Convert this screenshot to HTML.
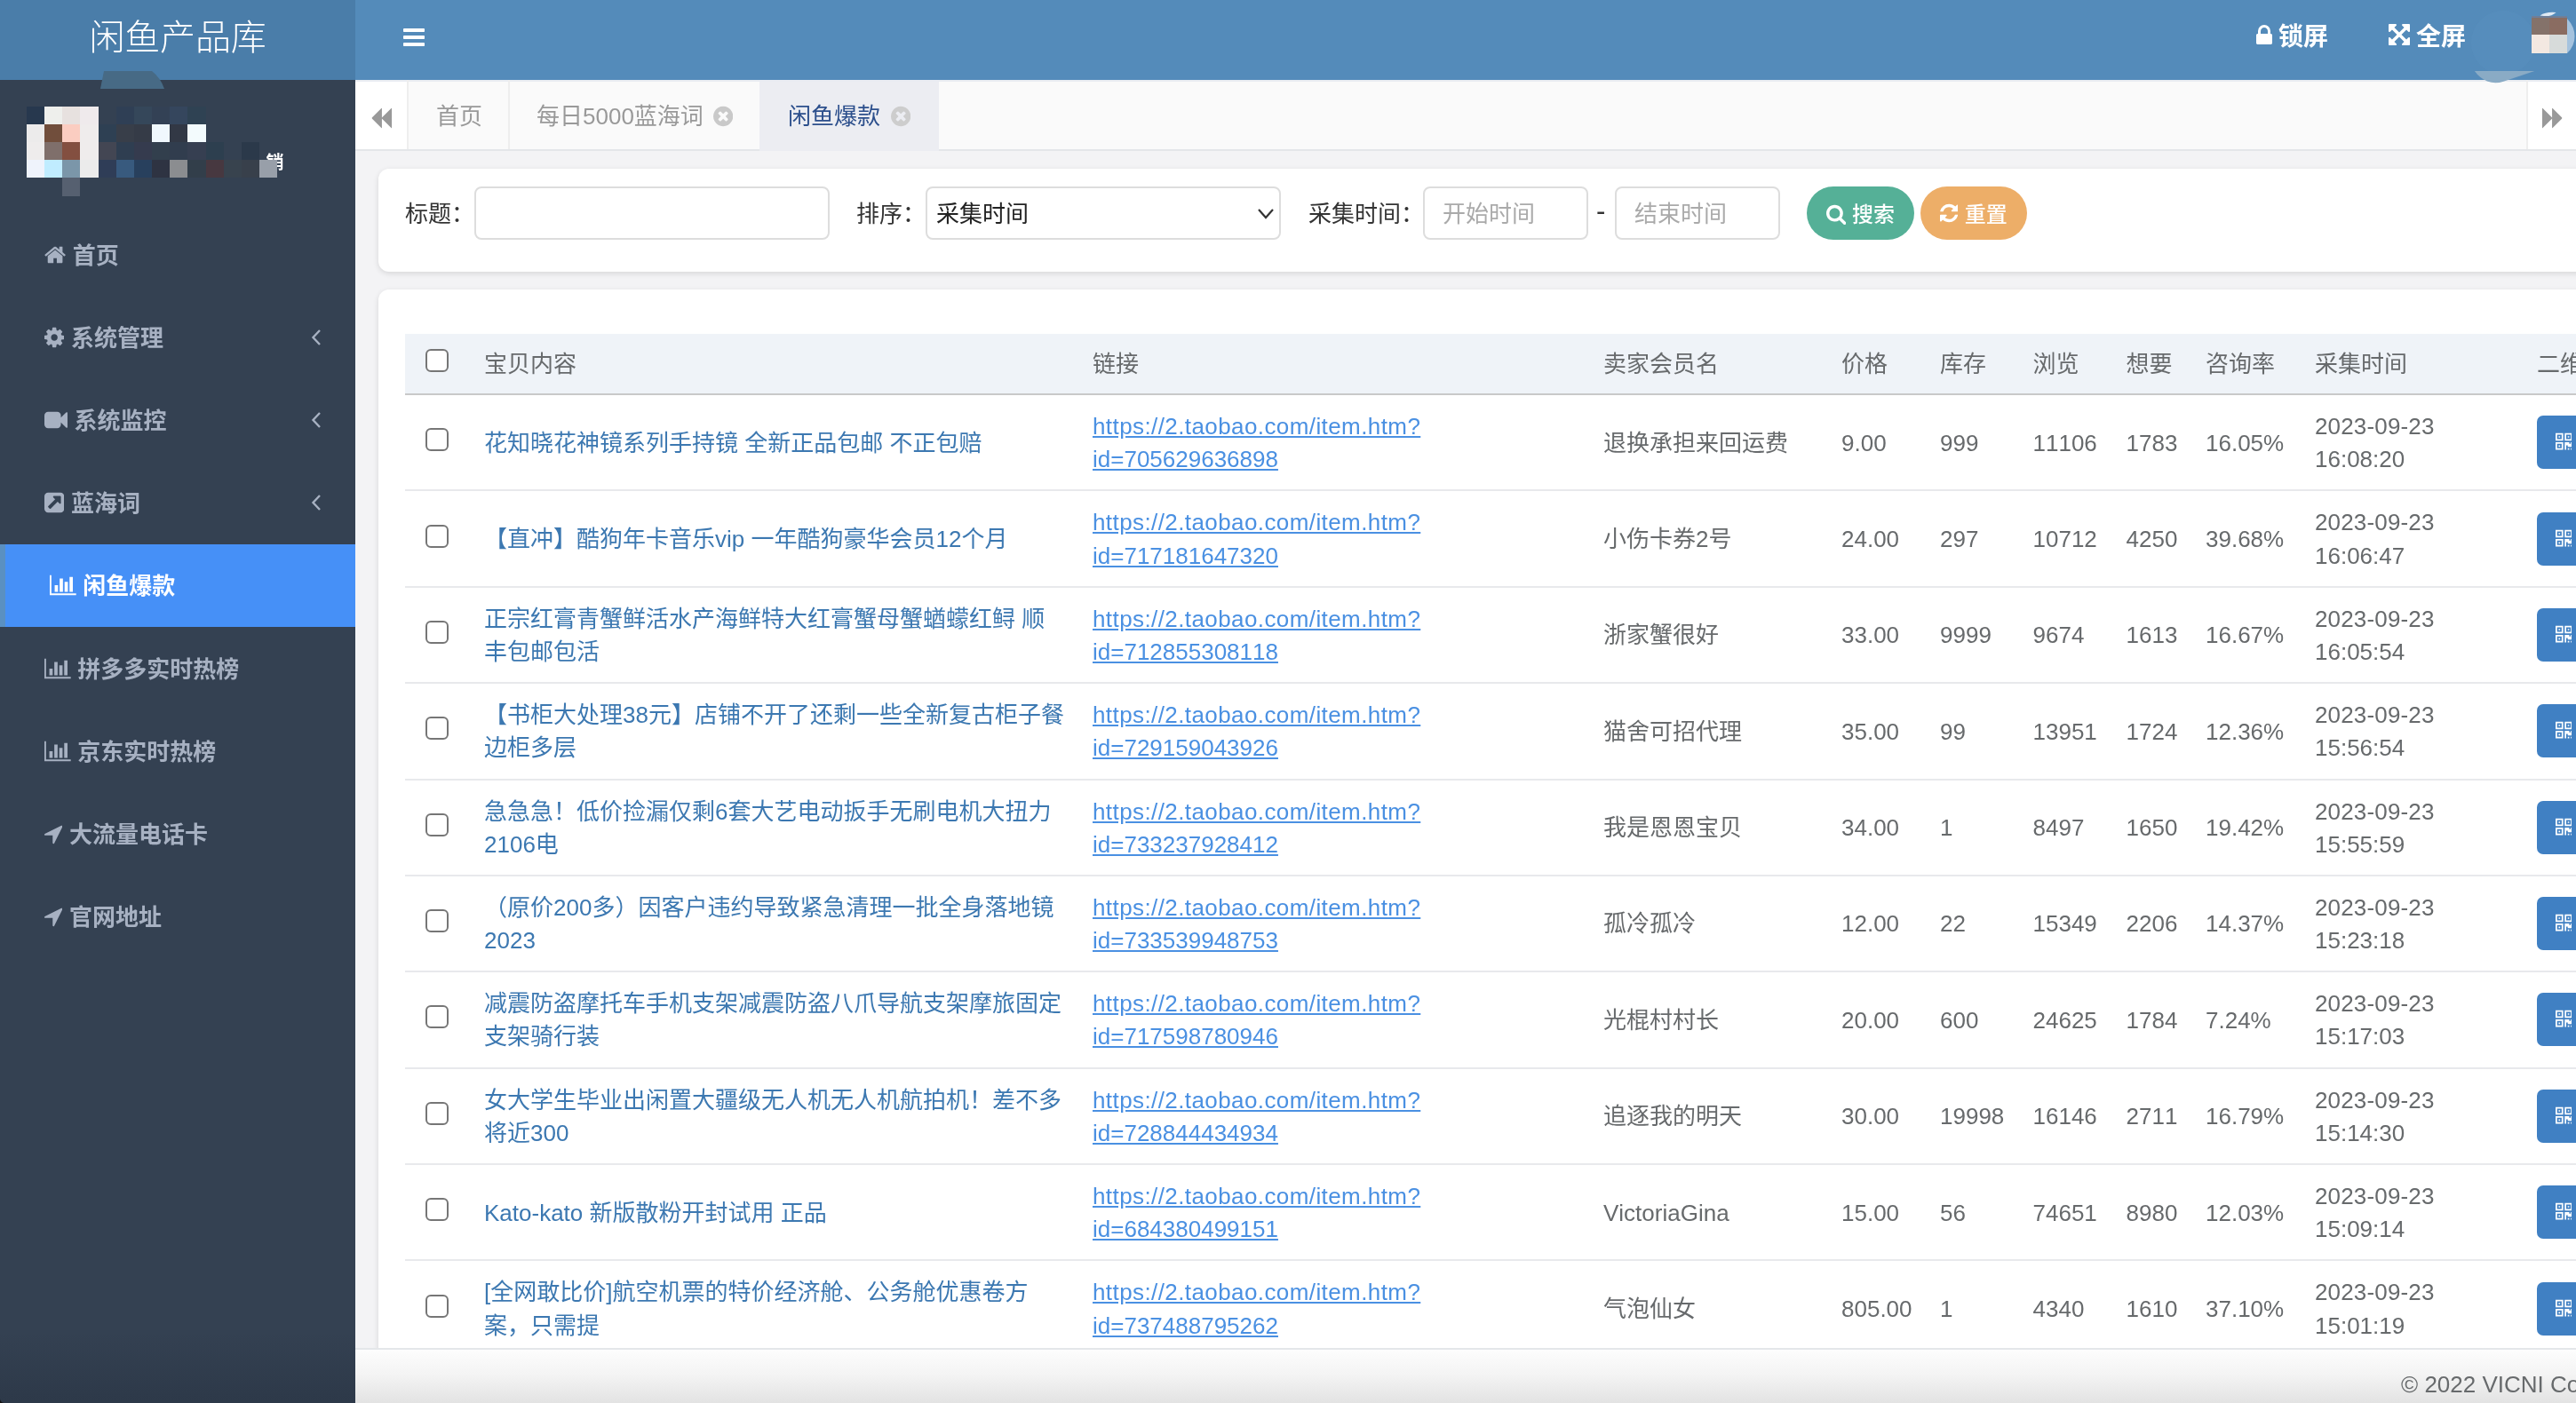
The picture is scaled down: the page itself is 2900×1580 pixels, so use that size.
<!DOCTYPE html>
<html lang="zh-CN"><head><meta charset="utf-8"><title>闲鱼产品库</title>
<style>
*{box-sizing:border-box}
html,body{margin:0;padding:0}
body{will-change:transform;font-kerning:none;width:2900px;height:1580px;overflow:hidden;position:relative;background:#f3f3f5;font-family:"Liberation Sans","Noto Sans CJK SC",sans-serif;font-size:26px;line-height:1.42857;color:#676a6c}
.ic{display:inline-block;vertical-align:middle;flex:none}
#side{position:absolute;left:0;top:0;width:400px;height:1580px;background:#344152}
#sidegrad{position:absolute;left:0;top:1500px;width:400px;height:80px;background:linear-gradient(rgba(20,28,40,0),rgba(20,28,40,.22))}
#corner{position:absolute;left:0;top:1575px;width:5px;height:5px;background:radial-gradient(circle at 100% 0,rgba(0,0,0,0) 4.5px,#111 5.5px)}
#logo{position:absolute;left:0;top:0;width:400px;height:90px;background:#4a7da9;color:#fff;font-size:40px;font-weight:300;line-height:90px;text-align:center}
#logo span{position:absolute;left:0;top:-3.5px;width:400px;text-align:center;letter-spacing:-0.2px}
#trap{position:absolute;left:113px;top:80px}
#mos i{position:absolute;display:block}
#xiao{position:absolute;left:299.5px;top:168.5px;font-size:20px;font-weight:700;color:#fff;line-height:28px}
.mi{position:relative;height:93.14px;padding-left:50px;display:flex;align-items:center;font-weight:700;font-size:26px;color:#a7b1c2;white-space:nowrap}
.mi span{margin-left:7.6px;position:relative;top:1.5px}
.mi.active{background:#4690f7;border-left:6px solid #5a90c2;color:#fff}
.mi .arr{position:absolute;left:350px;top:36px}
#menu{position:absolute;left:0;top:240.4px;width:400px}
#head{position:absolute;left:400px;top:0;width:2500px;height:90px;background:#548bba}
#head .t{position:absolute;top:0;height:90px;line-height:84px;color:#fff;font-size:28px;font-weight:700;white-space:nowrap}
#tabs{position:absolute;left:400px;top:90px;width:2500px;height:80px;background:#fafafa;border-bottom:2px solid #e4e6e9;box-shadow:inset 0 2px 0 #e9ecf2}
#tabs .tb{position:absolute;top:0;height:78px;line-height:83px;color:#999;font-size:26px;white-space:nowrap;border-right:2px solid #eee;background:#fafafa;box-shadow:inset 0 2px 0 #e9ecf2}
.card{position:absolute;left:426px;width:2600px;background:#fff;border-radius:12px;box-shadow:0 2px 6px rgba(0,0,0,.12)}
.lab{position:absolute;top:0;height:60px;line-height:62px;font-size:26px;color:#333;white-space:nowrap}
.inp{position:absolute;top:0;height:60px;border:2px solid #ddd;border-radius:8px;background:#fff;font-size:26px;line-height:58px;color:#aaa;padding-left:20px;white-space:nowrap}
.btn{position:absolute;top:0;height:60px;border-radius:30px;color:#fff;font-size:24px;font-weight:500;line-height:63.5px;white-space:nowrap}
table{border-collapse:collapse;table-layout:fixed;position:absolute;left:30px;top:50px;width:2599px}
th{background:#eff3f8;font-weight:400;text-align:left;padding:16px 16px 14px 16px;height:68px;line-height:37px;border-bottom:2px solid #c9c9c9;color:#676a6c;white-space:nowrap;overflow:hidden}
td{padding:17px 16px 15px;height:108.375px;border-bottom:2px solid #e8e9ec;vertical-align:middle;white-space:nowrap;color:#676a6c;overflow:hidden}
td.tt a{color:#3c78b1}
a.lk{color:#4a90e2;text-decoration:underline}
.l1{letter-spacing:.41px}
.d1{letter-spacing:.16px}
th .cb{top:-4.5px}
.cb{position:relative;top:-4px;left:-1px;display:block;width:26px;height:26px;border:2px solid #767676;border-radius:6px;background:#fff;margin:0 auto}
td.ck,th.ck{padding-left:0;padding-right:0}
.qb{display:block;width:120px;height:60px;background:#4080c3;border-radius:7px;padding:18px 0 0 20.6px;line-height:0}
td.op{padding-top:0;padding-bottom:0}
#foot{position:absolute;left:400px;top:1518px;width:2500px;height:62px;background:linear-gradient(#fdfdfd,#f4f4f4 45%,#e3e3e3);border-top:2px solid #e4e7ea;overflow:hidden}
#foot span{position:absolute;left:2303px;top:9px;font-size:26px;color:#676a6c;white-space:nowrap;line-height:60px}
</style></head><body>
<div id="side">
<div id="logo"><span>闲鱼产品库</span></div>
<svg id="trap" width="74" height="22" viewBox="0 0 74 22"><path d="M4 0 H58 Q68 8 72 20 H0 Z" fill="#476a85"/></svg>
<div id="xiao">销</div>
<div id="mos"><i style="left:30px;top:120px;width:20px;height:20px;background:#27384e"></i><i style="left:50px;top:120px;width:20px;height:20px;background:#eeefec"></i><i style="left:70px;top:120px;width:20px;height:20px;background:#e7e1df"></i><i style="left:90px;top:120px;width:21px;height:20px;background:#efeaec"></i><i style="left:131px;top:120px;width:20px;height:20px;background:#2f3f55"></i><i style="left:151px;top:120px;width:20px;height:20px;background:#35475a"></i><i style="left:171px;top:120px;width:20px;height:20px;background:#334155"></i><i style="left:191px;top:120px;width:20px;height:20px;background:#35465d"></i><i style="left:211px;top:120px;width:21px;height:20px;background:#2f4253"></i><i style="left:30px;top:140px;width:20px;height:20px;background:#ecebeb"></i><i style="left:50px;top:140px;width:20px;height:20px;background:#714e3c"></i><i style="left:70px;top:140px;width:20px;height:20px;background:#fbcdc1"></i><i style="left:90px;top:140px;width:21px;height:20px;background:#efecec"></i><i style="left:111px;top:140px;width:20px;height:20px;background:#2e4053"></i><i style="left:131px;top:140px;width:20px;height:20px;background:#383e49"></i><i style="left:151px;top:140px;width:20px;height:20px;background:#353b47"></i><i style="left:171px;top:140px;width:20px;height:20px;background:#f0f8fd"></i><i style="left:191px;top:140px;width:20px;height:20px;background:#323845"></i><i style="left:211px;top:140px;width:21px;height:20px;background:#f3fbfd"></i><i style="left:30px;top:160px;width:20px;height:20px;background:#eeecec"></i><i style="left:50px;top:160px;width:20px;height:20px;background:#7f6f6b"></i><i style="left:70px;top:160px;width:20px;height:20px;background:#834f40"></i><i style="left:90px;top:160px;width:21px;height:20px;background:#efecec"></i><i style="left:111px;top:160px;width:20px;height:20px;background:#434653"></i><i style="left:131px;top:160px;width:20px;height:20px;background:#2f3e51"></i><i style="left:151px;top:160px;width:20px;height:20px;background:#353b4e"></i><i style="left:171px;top:160px;width:20px;height:20px;background:#323f4d"></i><i style="left:191px;top:160px;width:20px;height:20px;background:#313d4e"></i><i style="left:211px;top:160px;width:21px;height:20px;background:#363f51"></i><i style="left:232px;top:160px;width:20px;height:20px;background:#2d3f4f"></i><i style="left:272px;top:160px;width:20px;height:20px;background:#2b394a"></i><i style="left:30px;top:180px;width:20px;height:20px;background:#eff3fc"></i><i style="left:50px;top:180px;width:20px;height:20px;background:#c0ecff"></i><i style="left:70px;top:180px;width:20px;height:20px;background:#7b96a9"></i><i style="left:90px;top:180px;width:21px;height:20px;background:#ebebeb"></i><i style="left:111px;top:180px;width:20px;height:20px;background:#2f3d57"></i><i style="left:131px;top:180px;width:20px;height:20px;background:#385a7e"></i><i style="left:151px;top:180px;width:20px;height:20px;background:#28405d"></i><i style="left:171px;top:180px;width:20px;height:20px;background:#2e3342"></i><i style="left:191px;top:180px;width:20px;height:20px;background:#8b8d90"></i><i style="left:211px;top:180px;width:21px;height:20px;background:#323e4a"></i><i style="left:232px;top:180px;width:20px;height:20px;background:#473840"></i><i style="left:252px;top:180px;width:20px;height:20px;background:#38434e"></i><i style="left:272px;top:180px;width:20px;height:20px;background:#38404b"></i><i style="left:292px;top:180px;width:20px;height:20px;background:#989fa9"></i><i style="left:70px;top:200px;width:20px;height:21px;background:#566070"></i></div>
<div id="sidegrad"></div><div id="corner"></div>
<div id="menu">
<div class="mi"><svg class="ic" viewBox="64 0 1664 1792" width="24.14" height="26" style=""><path fill="#a7b1c2" d="M1472 992v480q0 26-19 45t-45 19h-384v-384h-256v384h-384q-26 0-45-19t-19-45v-480q0-1 .5-3t.5-3l575-474 575 474q1 2 1 6zm223-69l-62 74q-8 9-21 11h-3q-13 0-21-7l-692-577-692 577q-12 8-24 7-13-2-21-11l-62-74q-8-10-7-23.500t11-21.500l719-599q32-26 76-26t76 26l244 204v-195q0-14 9-23t23-9h192q14 0 23 9t9 23v408l219 182q10 8 11 21.500t-7 23.500z"/></svg><span>首页</span></div>
<div class="mi"><svg class="ic" viewBox="128 0 1536 1792" width="22.29" height="26" style=""><path fill="#a7b1c2" d="M1152 896q0-106-75-181t-181-75-181 75-75 181 75 181 181 75 181-75 75-181zm512-109v222q0 12-8 23t-20 13l-185 28q-19 54-39 91 35 50 107 138 10 12 10 25t-9 23q-27 37-99 108t-94 71q-12 0-26-9l-138-108q-44 23-91 38-16 136-29 186-7 28-36 28h-222q-14 0-24.500-8.500t-11.500-21.500l-28-184q-49-16-90-37l-141 107q-10 9-25 9-14 0-25-11-126-114-165-168-7-10-7-23 0-12 8-23 15-21 51-66.500t54-70.500q-27-50-41-99l-183-27q-13-2-21-12.500t-8-23.500v-222q0-12 8-23t19-13l186-28q14-46 39-92-40-57-107-138-10-12-10-24 0-10 9-23 26-36 98.500-107.500t94.500-71.500q13 0 26 10l138 107q44-23 91-38 16-136 29-186 7-28 36-28h222q14 0 24.500 8.500t11.500 21.500l28 184q49 16 90 37l142-107q9-9 24-9 13 0 25 10 129 119 165 170 7 8 7 22 0 12-8 23-15 21-51 66.500t-54 70.500q26 50 41 98l183 28q13 2 21 12.500t8 23.500z"/></svg><span>系统管理</span><svg class="arr" width="12" height="20" viewBox="0 0 12 20"><path d="M10 2 L2.5 10 L10 18" fill="none" stroke="#a7b1c2" stroke-width="2.4"/></svg></div>
<div class="mi"><svg class="ic" viewBox="0 0 1792 1792" width="26.00" height="26" style=""><path fill="#a7b1c2" d="M1792 352v1088q0 42-39 59-13 5-25 5-27 0-45-19l-403-403v166q0 119-84.500 203.500t-203.500 84.500h-704q-119 0-203.500-84.500t-84.500-203.500v-704q0-119 84.500-203.500t203.500-84.500h704q119 0 203.500 84.500t84.500 203.500v165l403-402q18-19 45-19 12 0 25 5 39 17 39 59z"/></svg><span>系统监控</span><svg class="arr" width="12" height="20" viewBox="0 0 12 20"><path d="M10 2 L2.5 10 L10 18" fill="none" stroke="#a7b1c2" stroke-width="2.4"/></svg></div>
<div class="mi"><svg class="ic" viewBox="128 0 1536 1792" width="22.29" height="26" style=""><path fill="#a7b1c2" d="M1408 928v-480q0-26-19-45t-45-19h-480q-42 0-59 39-17 41 14 70l144 144-534 534q-19 19-19 45t19 45l102 102q19 19 45 19t45-19l534-534 144 144q18 19 45 19 12 0 25-5 39-17 39-59zm256-512v960q0 119-84.500 203.500t-203.500 84.500h-960q-119 0-203.500-84.500t-84.500-203.500v-960q0-119 84.500-203.500t203.500-84.500h960q119 0 203.500 84.500t84.500 203.500z"/></svg><span>蓝海词</span><svg class="arr" width="12" height="20" viewBox="0 0 12 20"><path d="M10 2 L2.5 10 L10 18" fill="none" stroke="#a7b1c2" stroke-width="2.4"/></svg></div>
<div class="mi active"><svg class="ic" viewBox="0 0 2048 1792" width="29.71" height="26" style=""><path fill="#fff" d="M640 896v512h-256v-512h256zm384-512v1024h-256v-1024h256zm1024 1152v128h-2048v-1536h128v1408h1920zm-640-896v768h-256v-768h256zm384-384v1152h-256v-1152h256z"/></svg><span>闲鱼爆款</span></div>
<div class="mi"><svg class="ic" viewBox="0 0 2048 1792" width="29.71" height="26" style=""><path fill="#a7b1c2" d="M640 896v512h-256v-512h256zm384-512v1024h-256v-1024h256zm1024 1152v128h-2048v-1536h128v1408h1920zm-640-896v768h-256v-768h256zm384-384v1152h-256v-1152h256z"/></svg><span>拼多多实时热榜</span></div>
<div class="mi"><svg class="ic" viewBox="0 0 2048 1792" width="29.71" height="26" style=""><path fill="#a7b1c2" d="M640 896v512h-256v-512h256zm384-512v1024h-256v-1024h256zm1024 1152v128h-2048v-1536h128v1408h1920zm-640-896v768h-256v-768h256zm384-384v1152h-256v-1152h256z"/></svg><span>京东实时热榜</span></div>
<div class="mi"><svg class="ic" viewBox="192 0 1408 1792" width="20.43" height="26" style=""><path fill="#a7b1c2" d="M1593 349l-640 1280q-17 35-57 35-5 0-15-2-22-5-35.500-22.500t-13.500-39.500v-576h-576q-22 0-39.500-13.500t-22.500-35.500 4-42 29-30l1280-640q13-7 29-7 27 0 45 19 15 14 18.500 34.500t-6.500 39.500z"/></svg><span>大流量电话卡</span></div>
<div class="mi"><svg class="ic" viewBox="192 0 1408 1792" width="20.43" height="26" style=""><path fill="#a7b1c2" d="M1593 349l-640 1280q-17 35-57 35-5 0-15-2-22-5-35.500-22.500t-13.500-39.500v-576h-576q-22 0-39.500-13.500t-22.500-35.500 4-42 29-30l1280-640q13-7 29-7 27 0 45 19 15 14 18.500 34.500t-6.500 39.500z"/></svg><span>官网地址</span></div>
</div>
</div>
<div id="head">
<svg class="ic" viewBox="128 0 1536 1792" width="24.00" height="28" style="position:absolute;left:54px;top:28px"><path fill="#fff" d="M1664 1344v128q0 26-19 45t-45 19h-1408q-26 0-45-19t-19-45v-128q0-26 19-45t45-19h1408q26 0 45 19t19 45zm0-512v128q0 26-19 45t-45 19h-1408q-26 0-45-19t-19-45v-128q0-26 19-45t45-19h1408q26 0 45 19t19 45zm0-512v128q0 26-19 45t-45 19h-1408q-26 0-45-19t-19-45v-128q0-26 19-45t45-19h1408q26 0 45 19t19 45z"/></svg>
<svg class="ic" viewBox="320 0 1152 1792" width="18.00" height="28" style="position:absolute;left:2139.7px;top:26px"><path fill="#fff" d="M640 768h512v-192q0-106-75-181t-181-75-181 75-75 181v192zm832 96v576q0 40-28 68t-68 28h-960q-40 0-68-28t-28-68v-576q0-40 28-68t68-28h32v-192q0-184 132-316t316-132 316 132 132 316v192h32q40 0 68 28t28 68z"/></svg><div class="t" style="left:2165px">锁屏</div>
<svg class="ic" viewBox="128 0 1536 1792" width="24.00" height="28" style="position:absolute;left:2288.6px;top:25.4px"><path fill="#fff" d="M1411 541l-355 355 355 355 144-144q29-31 70-14 39 17 39 59v448q0 26-19 45t-45 19h-448q-42 0-59-40-17-39 14-69l144-144-355-355-355 355 144 144q31 30 14 69-17 40-59 40h-448q-26 0-45-19t-19-45v-448q0-42 40-59 39-17 69 14l144 144 355-355-355-355-144 144q-19 19-45 19-12 0-24-5-40-17-40-59v-448q0-26 19-45t45-19h448q42 0 59 40 17 39-14 69l-144 144 355 355 355-355-144-144q-31-30-14-69 17-40 59-40h448q26 0 45 19t19 45v448q0 42-39 59-13 5-25 5-26 0-45-19z"/></svg><div class="t" style="left:2320px">全屏</div>


</div>
<div id="tabs">
<div class="tb" style="left:0;width:60px;background:#fff"><svg class="ic" viewBox="0 0 1792 1792" width="26.00" height="26" style="position:absolute;left:15.9px;top:29.6px"><path fill="#999" d="M1683 141q19-19 32-13t13 32v1472q0 26-13 32t-32-13l-710-710q-9-9-13-19v710q0 26-13 32t-32-13l-710-710q-19-19-19-45t19-45l710-710q19-19 32-13t13 32v710q4-10 13-19z"/></svg></div>
<div class="tb" style="left:60px;width:114px;padding-left:31px">首页</div>
<div class="tb" style="left:174px;width:281px;padding-left:30px;border-right:0">每日5000蓝海词<svg class="ic" viewBox="128 0 1536 1792" width="22.29" height="26" style="position:absolute;left:228.9px;top:28px"><path fill="#c9c9c9" d="M1277 1122q0-26-19-45l-181-181 181-181q19-19 19-45 0-27-19-46l-90-90q-19-19-46-19-26 0-45 19l-181 181-181-181q-19-19-45-19-27 0-46 19l-90 90q-19 19-19 46 0 26 19 45l181 181-181 181q-19 19-19 45 0 27 19 46l90 90q19 19 46 19 26 0 45-19l181-181 181 181q19 19 45 19 27 0 46-19l90-90q19-19 19-46zm387-226q0 209-103 385.500t-279.500 279.500-385.500 103-385.500-103-279.500-279.500-103-385.500 103-385.500 279.500-279.500 385.500-103 385.500 103 279.500 279.500 103 385.500z"/></svg></div>
<div class="tb" style="left:455px;width:202px;padding-left:32px;background:#ecedf2;color:#2c4f8c;border-right:0;height:80px">闲鱼爆款<svg class="ic" viewBox="128 0 1536 1792" width="22.29" height="26" style="position:absolute;left:147.5px;top:28px"><path fill="#cdcdcd" d="M1277 1122q0-26-19-45l-181-181 181-181q19-19 19-45 0-27-19-46l-90-90q-19-19-46-19-26 0-45 19l-181 181-181-181q-19-19-45-19-27 0-46 19l-90 90q-19 19-19 46 0 26 19 45l181 181-181 181q-19 19-19 45 0 27 19 46l90 90q19 19 46 19 26 0 45-19l181-181 181 181q19 19 45 19 27 0 46-19l90-90q19-19 19-46zm387-226q0 209-103 385.500t-279.500 279.500-385.500 103-385.500-103-279.500-279.500-103-385.500 103-385.500 279.500-279.500 385.500-103 385.500 103 279.500 279.500 103 385.500z"/></svg></div>
<div class="tb" style="left:2444px;width:60px;background:#fff;border-right:0;border-left:2px solid #eee"><svg class="ic" viewBox="0 0 1792 1792" width="26.00" height="26" style="position:absolute;left:14.8px;top:29.8px"><path fill="#999" d="M109 1651q-19 19-32 13t-13-32v-1472q0-26 13-32t32 13l710 710q9 9 13 19v-710q0-26 13-32t32 13l710 710q19 19 19 45t-19 45l-710 710q-19 19-32 13t-13-32v-710q-4 10-13 19z"/></svg></div>
</div>
<svg id="deco" style="position:absolute;left:2740px;top:0" width="160" height="100" viewBox="2740 0 160 100">
<circle cx="2818" cy="48" r="36" fill="#5c93c1" opacity=".35"/>
<path d="M2890 21 Q2898.5 30 2898.5 41 Q2898.5 52 2890 60 Z" fill="#a5c3de"/>
<path d="M2859.5 17.5 Q2866 13 2877.6 14 Q2873 18.2 2866 18.2 Z" fill="#dfe9f3"/>
<path d="M2785.9 80 H2853.3 L2818.4 91.7 Q2809 95 2800 91.5 Q2791 87.5 2785.9 80 Z" fill="#8aabc5"/>
<rect x="2850" y="18" width="40" height="2" fill="#6f7f99"/>
<rect x="2850" y="20" width="20" height="19" fill="#84726a"/><rect x="2870" y="20" width="20" height="19" fill="#8a6c61"/>
<rect x="2850" y="39" width="20" height="21" fill="#f3e8e1"/><rect x="2870" y="39" width="20" height="21" fill="#d7dbda"/>
</svg>
<div class="card" style="top:190px;height:116px">
 <div style="position:absolute;left:0;top:20px">
  <div class="lab" style="left:30px">标题：</div>
  <div class="inp" style="left:108px;width:400px"></div>
  <div class="lab" style="left:538px">排序：</div>
  <div class="inp" style="left:616px;width:400px;color:#222;padding-left:10px">采集时间<svg style="position:absolute;right:5px;top:22px" width="20" height="14" viewBox="0 0 20 14"><path d="M2 2 L10 11 L18 2" fill="none" stroke="#333" stroke-width="2.2"/></svg></div>
  <div class="lab" style="left:1047px">采集时间：</div>
  <div class="inp" style="left:1176px;width:186px">开始时间</div>
  <div class="lab" style="left:1371px;font-size:31px;color:#333;top:-3.5px">-</div>
  <div class="inp" style="left:1392px;width:186px">结束时间</div>
  <div class="btn" style="left:1608px;width:121px;background:#55b097"><svg class="ic" viewBox="64 0 1664 1792" width="22.29" height="24" style="position:absolute;left:21.9px;top:19px"><path fill="#fff" d="M1216 832q0-185-131.500-316.500t-316.500-131.500-316.500 131.500-131.500 316.500 131.500 316.500 316.500 131.500 316.500-131.500 131.500-316.500zm512 832q0 52-38 90t-90 38q-54 0-90-38l-343-342q-179 124-399 124-143 0-273.500-55.500t-225-150-150-225-55.500-273.500 55.500-273.500 150-225 225-150 273.500-55.500 273.500 55.500 225 150 150 225 55.500 273.500q0 220-124 399l343 343q37 37 37 90z"/></svg><span style="position:absolute;left:51px">搜索</span></div>
  <div class="btn" style="left:1736px;width:120px;background:#edae68"><svg class="ic" viewBox="128 0 1536 1792" width="20.57" height="24" style="position:absolute;left:21.7px;top:18px"><path fill="#fff" d="M1639 1056q0 5-1 7-64 268-268 434.500t-478 166.500q-146 0-282.500-55t-243.500-157l-129 129q-19 19-45 19t-45-19-19-45v-448q0-26 19-45t45-19h448q26 0 45 19t19 45-19 45l-137 137q71 66 161 102t187 36q134 0 250-65t186-179q11-17 53-117 8-23 30-23h192q13 0 22.500 9.500t9.500 22.500zm25-800v448q0 26-19 45t-45 19h-448q-26 0-45-19t-19-45 19-45l138-138q-148-137-349-137-134 0-250 65t-186 179q-11 17-53 117-8 23-30 23h-199q-13 0-22.500-9.500t-9.500-22.500v-7q65-268 270-434.500t480-166.500q146 0 284 55.500t245 156.500l130-129q19-19 45-19t45 19 19 45z"/></svg><span style="position:absolute;left:49.7px">重置</span></div>
 </div>
</div>
<div class="card" style="top:326px;height:1400px">
<table>
<colgroup><col style="width:73px"><col style="width:685px"><col style="width:575px"><col style="width:268px"><col style="width:111px"><col style="width:104.5px"><col style="width:105px"><col style="width:89.5px"><col style="width:123px"><col style="width:250px"><col style="width:215px"></colgroup>
<thead><tr><th class="ck"><b class="cb"></b></th><th>宝贝内容</th><th>链接</th><th>卖家会员名</th><th>价格</th><th>库存</th><th>浏览</th><th>想要</th><th>咨询率</th><th>采集时间</th><th>二维码</th></tr></thead>
<tbody>
<tr><td class="ck"><b class="cb"></b></td><td class="tt"><a>花知晓花神镜系列手持镜 全新正品包邮 不正包赔</a></td><td><a class="lk"><span class="l1">https://2.taobao.com/item.htm?</span><br>id=705629636898</a></td><td>退换承担来回运费</td><td>9.00</td><td>999</td><td>11106</td><td>1783</td><td>16.05%</td><td><span class="d1">2023-09-23</span><br>16:08:20</td><td class="op"><span class="qb"><svg class="ic" viewBox="192 0 1408 1792" width="18.86" height="24" style=""><path fill="#fff" d="M576 1152v128h-128v-128h128zm0-768v128h-128v-128h128zm768 0v128h-128v-128h128zm-1024 1023h384v-383h-384v383zm0-767h384v-384h-384v384zm768 0h384v-384h-384v384zm-256 256v640h-640v-640h640zm512 512v128h-128v-128h128zm256 0v128h-128v-128h128zm0-512v384h-384v-128h-128v384h-128v-640h384v128h128v-128h128zm-768-768v640h-640v-640h640zm768 0v640h-640v-640h640z"/></svg></span></td></tr>
<tr><td class="ck"><b class="cb"></b></td><td class="tt"><a>【直冲】酷狗年卡音乐vip 一年酷狗豪华会员12个月</a></td><td><a class="lk"><span class="l1">https://2.taobao.com/item.htm?</span><br>id=717181647320</a></td><td>小伤卡券2号</td><td>24.00</td><td>297</td><td>10712</td><td>4250</td><td>39.68%</td><td><span class="d1">2023-09-23</span><br>16:06:47</td><td class="op"><span class="qb"><svg class="ic" viewBox="192 0 1408 1792" width="18.86" height="24" style=""><path fill="#fff" d="M576 1152v128h-128v-128h128zm0-768v128h-128v-128h128zm768 0v128h-128v-128h128zm-1024 1023h384v-383h-384v383zm0-767h384v-384h-384v384zm768 0h384v-384h-384v384zm-256 256v640h-640v-640h640zm512 512v128h-128v-128h128zm256 0v128h-128v-128h128zm0-512v384h-384v-128h-128v384h-128v-640h384v128h128v-128h128zm-768-768v640h-640v-640h640zm768 0v640h-640v-640h640z"/></svg></span></td></tr>
<tr><td class="ck"><b class="cb"></b></td><td class="tt"><a>正宗红膏青蟹鲜活水产海鲜特大红膏蟹母蟹蝤蠓红鲟 顺<br>丰包邮包活</a></td><td><a class="lk"><span class="l1">https://2.taobao.com/item.htm?</span><br>id=712855308118</a></td><td>浙家蟹很好</td><td>33.00</td><td>9999</td><td>9674</td><td>1613</td><td>16.67%</td><td><span class="d1">2023-09-23</span><br>16:05:54</td><td class="op"><span class="qb"><svg class="ic" viewBox="192 0 1408 1792" width="18.86" height="24" style=""><path fill="#fff" d="M576 1152v128h-128v-128h128zm0-768v128h-128v-128h128zm768 0v128h-128v-128h128zm-1024 1023h384v-383h-384v383zm0-767h384v-384h-384v384zm768 0h384v-384h-384v384zm-256 256v640h-640v-640h640zm512 512v128h-128v-128h128zm256 0v128h-128v-128h128zm0-512v384h-384v-128h-128v384h-128v-640h384v128h128v-128h128zm-768-768v640h-640v-640h640zm768 0v640h-640v-640h640z"/></svg></span></td></tr>
<tr><td class="ck"><b class="cb"></b></td><td class="tt"><a>【书柜大处理38元】店铺不开了还剩一些全新复古柜子餐<br>边柜多层</a></td><td><a class="lk"><span class="l1">https://2.taobao.com/item.htm?</span><br>id=729159043926</a></td><td>猫舍可招代理</td><td>35.00</td><td>99</td><td>13951</td><td>1724</td><td>12.36%</td><td><span class="d1">2023-09-23</span><br>15:56:54</td><td class="op"><span class="qb"><svg class="ic" viewBox="192 0 1408 1792" width="18.86" height="24" style=""><path fill="#fff" d="M576 1152v128h-128v-128h128zm0-768v128h-128v-128h128zm768 0v128h-128v-128h128zm-1024 1023h384v-383h-384v383zm0-767h384v-384h-384v384zm768 0h384v-384h-384v384zm-256 256v640h-640v-640h640zm512 512v128h-128v-128h128zm256 0v128h-128v-128h128zm0-512v384h-384v-128h-128v384h-128v-640h384v128h128v-128h128zm-768-768v640h-640v-640h640zm768 0v640h-640v-640h640z"/></svg></span></td></tr>
<tr><td class="ck"><b class="cb"></b></td><td class="tt"><a>急急急！低价捡漏仅剩6套大艺电动扳手无刷电机大扭力<br>2106电</a></td><td><a class="lk"><span class="l1">https://2.taobao.com/item.htm?</span><br>id=733237928412</a></td><td>我是恩恩宝贝</td><td>34.00</td><td>1</td><td>8497</td><td>1650</td><td>19.42%</td><td><span class="d1">2023-09-23</span><br>15:55:59</td><td class="op"><span class="qb"><svg class="ic" viewBox="192 0 1408 1792" width="18.86" height="24" style=""><path fill="#fff" d="M576 1152v128h-128v-128h128zm0-768v128h-128v-128h128zm768 0v128h-128v-128h128zm-1024 1023h384v-383h-384v383zm0-767h384v-384h-384v384zm768 0h384v-384h-384v384zm-256 256v640h-640v-640h640zm512 512v128h-128v-128h128zm256 0v128h-128v-128h128zm0-512v384h-384v-128h-128v384h-128v-640h384v128h128v-128h128zm-768-768v640h-640v-640h640zm768 0v640h-640v-640h640z"/></svg></span></td></tr>
<tr><td class="ck"><b class="cb"></b></td><td class="tt"><a>（原价200多）因客户违约导致紧急清理一批全身落地镜<br>2023</a></td><td><a class="lk"><span class="l1">https://2.taobao.com/item.htm?</span><br>id=733539948753</a></td><td>孤冷孤冷</td><td>12.00</td><td>22</td><td>15349</td><td>2206</td><td>14.37%</td><td><span class="d1">2023-09-23</span><br>15:23:18</td><td class="op"><span class="qb"><svg class="ic" viewBox="192 0 1408 1792" width="18.86" height="24" style=""><path fill="#fff" d="M576 1152v128h-128v-128h128zm0-768v128h-128v-128h128zm768 0v128h-128v-128h128zm-1024 1023h384v-383h-384v383zm0-767h384v-384h-384v384zm768 0h384v-384h-384v384zm-256 256v640h-640v-640h640zm512 512v128h-128v-128h128zm256 0v128h-128v-128h128zm0-512v384h-384v-128h-128v384h-128v-640h384v128h128v-128h128zm-768-768v640h-640v-640h640zm768 0v640h-640v-640h640z"/></svg></span></td></tr>
<tr><td class="ck"><b class="cb"></b></td><td class="tt"><a>减震防盗摩托车手机支架减震防盗八爪导航支架摩旅固定<br>支架骑行装</a></td><td><a class="lk"><span class="l1">https://2.taobao.com/item.htm?</span><br>id=717598780946</a></td><td>光棍村村长</td><td>20.00</td><td>600</td><td>24625</td><td>1784</td><td>7.24%</td><td><span class="d1">2023-09-23</span><br>15:17:03</td><td class="op"><span class="qb"><svg class="ic" viewBox="192 0 1408 1792" width="18.86" height="24" style=""><path fill="#fff" d="M576 1152v128h-128v-128h128zm0-768v128h-128v-128h128zm768 0v128h-128v-128h128zm-1024 1023h384v-383h-384v383zm0-767h384v-384h-384v384zm768 0h384v-384h-384v384zm-256 256v640h-640v-640h640zm512 512v128h-128v-128h128zm256 0v128h-128v-128h128zm0-512v384h-384v-128h-128v384h-128v-640h384v128h128v-128h128zm-768-768v640h-640v-640h640zm768 0v640h-640v-640h640z"/></svg></span></td></tr>
<tr><td class="ck"><b class="cb"></b></td><td class="tt"><a>女大学生毕业出闲置大疆级无人机无人机航拍机！差不多<br>将近300</a></td><td><a class="lk"><span class="l1">https://2.taobao.com/item.htm?</span><br>id=728844434934</a></td><td>追逐我的明天</td><td>30.00</td><td>19998</td><td>16146</td><td>2711</td><td>16.79%</td><td><span class="d1">2023-09-23</span><br>15:14:30</td><td class="op"><span class="qb"><svg class="ic" viewBox="192 0 1408 1792" width="18.86" height="24" style=""><path fill="#fff" d="M576 1152v128h-128v-128h128zm0-768v128h-128v-128h128zm768 0v128h-128v-128h128zm-1024 1023h384v-383h-384v383zm0-767h384v-384h-384v384zm768 0h384v-384h-384v384zm-256 256v640h-640v-640h640zm512 512v128h-128v-128h128zm256 0v128h-128v-128h128zm0-512v384h-384v-128h-128v384h-128v-640h384v128h128v-128h128zm-768-768v640h-640v-640h640zm768 0v640h-640v-640h640z"/></svg></span></td></tr>
<tr><td class="ck"><b class="cb"></b></td><td class="tt"><a>Kato-kato 新版散粉开封试用 正品</a></td><td><a class="lk"><span class="l1">https://2.taobao.com/item.htm?</span><br>id=684380499151</a></td><td>VictoriaGina</td><td>15.00</td><td>56</td><td>74651</td><td>8980</td><td>12.03%</td><td><span class="d1">2023-09-23</span><br>15:09:14</td><td class="op"><span class="qb"><svg class="ic" viewBox="192 0 1408 1792" width="18.86" height="24" style=""><path fill="#fff" d="M576 1152v128h-128v-128h128zm0-768v128h-128v-128h128zm768 0v128h-128v-128h128zm-1024 1023h384v-383h-384v383zm0-767h384v-384h-384v384zm768 0h384v-384h-384v384zm-256 256v640h-640v-640h640zm512 512v128h-128v-128h128zm256 0v128h-128v-128h128zm0-512v384h-384v-128h-128v384h-128v-640h384v128h128v-128h128zm-768-768v640h-640v-640h640zm768 0v640h-640v-640h640z"/></svg></span></td></tr>
<tr><td class="ck"><b class="cb"></b></td><td class="tt"><a>[全网敢比价]航空机票的特价经济舱、公务舱优惠卷方<br>案，只需提</a></td><td><a class="lk"><span class="l1">https://2.taobao.com/item.htm?</span><br>id=737488795262</a></td><td>气泡仙女</td><td>805.00</td><td>1</td><td>4340</td><td>1610</td><td>37.10%</td><td><span class="d1">2023-09-23</span><br>15:01:19</td><td class="op"><span class="qb"><svg class="ic" viewBox="192 0 1408 1792" width="18.86" height="24" style=""><path fill="#fff" d="M576 1152v128h-128v-128h128zm0-768v128h-128v-128h128zm768 0v128h-128v-128h128zm-1024 1023h384v-383h-384v383zm0-767h384v-384h-384v384zm768 0h384v-384h-384v384zm-256 256v640h-640v-640h640zm512 512v128h-128v-128h128zm256 0v128h-128v-128h128zm0-512v384h-384v-128h-128v384h-128v-640h384v128h128v-128h128zm-768-768v640h-640v-640h640zm768 0v640h-640v-640h640z"/></svg></span></td></tr>
</tbody></table>
</div>
<div id="foot"><span>© 2022 VICNI Copyright</span></div>
</body></html>
